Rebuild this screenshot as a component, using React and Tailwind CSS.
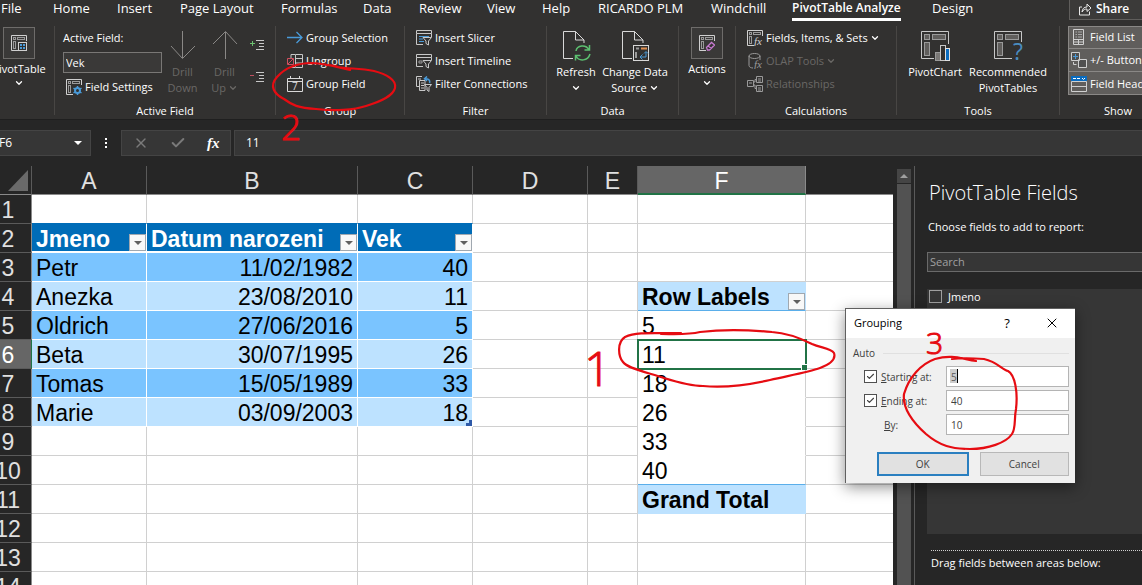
import { ChevronDown, X, Check } from 'lucide-react'

const tabs = [
  { name: 'File', width: 'w-[52px]' },
  { name: 'Home', width: 'w-16' },
  { name: 'Insert', width: 'w-[63px]' },
  { name: 'Page Layout', width: 'w-[101px]' },
  { name: 'Formulas', width: 'w-[82px]' },
  { name: 'Data', width: 'w-14' },
  { name: 'Review', width: 'w-[68px]' },
  { name: 'View', width: 'w-[55px]' },
  { name: 'Help', width: 'w-14' },
  { name: 'RICARDO PLM', width: 'w-[113px]' },
  { name: 'Windchill', width: 'w-[81px]' },
  { name: 'PivotTable Analyze', width: 'w-[140px]', active: true },
  { name: 'Design', width: 'w-16' }
]

const people = [
  ['Petr', '11/02/1982', 40],
  ['Anezka', '23/08/2010', 11],
  ['Oldrich', '27/06/2016', 5],
  ['Beta', '30/07/1995', 26],
  ['Tomas', '15/05/1989', 33],
  ['Marie', '03/09/2003', 18]
]

const pivotLabels = { 5: '5', 6: '11', 7: '18', 8: '26', 9: '33', 10: '40' }

export default function App() {
  return <div className="relative h-screen overflow-hidden flex flex-col bg-[#262626] text-white text-[11px] leading-4 font-['Open_Sans','Noto_Sans',sans-serif]">
    <Tabs></Tabs>
    <Ribbon></Ribbon>
    <FormulaBar></FormulaBar>
    <div className="flex grow min-h-0">
      <Sheet></Sheet>
      <ScrollBar></ScrollBar>
      <FieldsPane></FieldsPane>
    </div>
    <GroupingDialog></GroupingDialog>
    <Ink></Ink>
  </div>
}

const Tabs = () => {
  return <nav className="flex shrink-0 h-[22px] bg-[#323130] pl-px text-[13px] leading-4 whitespace-nowrap">
    {tabs.map(tab => <div key={tab.name} className={`shrink-0 ${tab.width}`}>
      <button className={tab.active ? 'flex font-semibold border-b-3 border-white h-[21px] text-[12px]' : 'flex'}>{tab.name}</button>
    </div>)}
    <div className="grow"></div>
    <button className="shrink-0 w-[74px] -mr-px h-5 pl-2 pb-0.5 flex items-center gap-1 font-semibold text-[12px] bg-[#3b3a39] border border-t-0 border-[#605e5c]">
      <svg className="size-3.5" viewBox="0 0 14 14" fill="none" stroke="#e8e8e8">
        <path d="M4 5H1.500V13H11.500V9.500M4 10C4.500 6.500 6 5 9 5V2L13 6L9 9.500V7C7 7 5.500 7.500 4 10Z" />
      </svg>
      Share
    </button>
  </nav>
}

const Divider = () => <div className="shrink-0 w-px h-[89px] bg-[#484644]"></div>

const Group = ({ title, width, children }) => {
  return <section className={`shrink-0 flex flex-col whitespace-nowrap ${width}`}>
    <div className="h-[77px]">{children}</div>
    <h2 className="text-center">{title}</h2>
  </section>
}

const Item = ({ icon, disabled, menu, children }) => {
  return <button disabled={disabled} className={`flex items-center h-[23px] gap-0.5 ${disabled ? 'text-[#6a6866]' : ''}`}>
    <span className="w-4 shrink-0">{icon}</span>
    <span>{children}</span>
    {menu && <ChevronDown className="size-2.5" strokeWidth={3}></ChevronDown>}
  </button>
}

const BigButton = ({ icon, first, second, menu, disabled, width }) => {
  return <button disabled={disabled} className={`shrink-0 flex flex-col items-center pt-1 ${width} ${disabled ? 'text-[#6a6866]' : ''}`}>
    <span className="h-[34px]">{icon}</span>
    <span>{first}</span>
    <span className="flex items-center gap-0.5 h-4">
      {second}
      {menu && <ChevronDown className="size-2.5" strokeWidth={3}></ChevronDown>}
    </span>
  </button>
}

const BoxButton = ({ icon, name }) => {
  return <button className="w-full flex flex-col items-center pt-px">
    <span className="size-8 flex items-center justify-center border border-[#6e6c6a] bg-[#3a3938]">{icon}</span>
    <span className="mt-0.5">{name}</span>
    <ChevronDown className="size-2.5 mt-px" strokeWidth={3}></ChevronDown>
  </button>
}

const Ribbon = () => {
  return <div className="flex shrink-0 h-[98px] pt-1 bg-[#323130] overflow-hidden border-b border-[#1f1f1f]">
    <Group title="" width="-ml-4 w-[70px]">
      <BoxButton name="PivotTable" icon={<PivotIcon badge="grid"></PivotIcon>}></BoxButton>
    </Group>
    <Divider></Divider>
    <Group title="Active Field" width="w-[220px]">
      <div className="flex">
        <div className="w-[107px] shrink-0 pl-2 pt-1">
          <label htmlFor="active-field" className="block h-[22px]">Active Field:</label>
          <input id="active-field" defaultValue="Vek" className="block w-[99px] h-[21px] px-0.5 border border-[#797775] bg-[#3a3938]" />
          <div className="pl-[3px] pt-0.5">
            <Item icon={<PivotIcon badge="gear"></PivotIcon>}>
              <span className="pl-px">Field Settings</span>
            </Item>
          </div>
        </div>
        <BigButton disabled first="Drill" second="Down" width="w-[41px]" icon={<DrillIcon></DrillIcon>}></BigButton>
        <BigButton disabled menu first="Drill" second="Up" width="w-[43px]" icon={<DrillIcon up></DrillIcon>}></BigButton>
        <div className="flex flex-col gap-4 pt-3 pl-1">
          <button aria-label="Expand Field"><ExpandIcon plus></ExpandIcon></button>
          <button aria-label="Collapse Field"><ExpandIcon></ExpandIcon></button>
        </div>
      </div>
    </Group>
    <Divider></Divider>
    <Group title="Group" width="w-32">
      <div className="pl-[11px]">
        <Item icon={<ArrowIcon></ArrowIcon>}><span className="pl-px">Group Selection</span></Item>
        <Item icon={<UngroupIcon></UngroupIcon>}><span className="pl-px">Ungroup</span></Item>
        <Item icon={<CalendarIcon></CalendarIcon>}><span className="pl-px">Group Field</span></Item>
      </div>
    </Group>
    <Divider></Divider>
    <Group title="Filter" width="w-[141px]">
      <div className="pl-[11px]">
        <Item icon={<FilterIcon kind="slicer"></FilterIcon>}><span className="pl-px">Insert Slicer</span></Item>
        <Item icon={<FilterIcon kind="timeline"></FilterIcon>}><span className="pl-px">Insert Timeline</span></Item>
        <Item icon={<ConnectionsIcon></ConnectionsIcon>}><span className="pl-px">Filter Connections</span></Item>
      </div>
    </Group>
    <Divider></Divider>
    <Group title="Data" width="w-[131px]">
      <div className="flex pl-2">
        <BigButton menu first="Refresh" width="w-[42px]" icon={<PageIcon kind="refresh"></PageIcon>}></BigButton>
        <BigButton menu first="Change Data" second="Source" width="w-[76px]" icon={<PageIcon kind="source"></PageIcon>}></BigButton>
      </div>
    </Group>
    <Divider></Divider>
    <Group title="" width="w-14">
      <BoxButton name="Actions" icon={<PivotIcon badge="eraser"></PivotIcon>}></BoxButton>
    </Group>
    <Divider></Divider>
    <Group title="Calculations" width="w-40">
      <div className="pl-[11px]">
        <Item menu icon={<PivotIcon badge="fx"></PivotIcon>}><span className="pl-px">Fields, Items, &amp; Sets</span></Item>
        <Item disabled menu icon={<OlapIcon></OlapIcon>}><span className="pl-px">OLAP Tools</span></Item>
        <Item disabled icon={<RelationsIcon></RelationsIcon>}><span className="pl-px">Relationships</span></Item>
      </div>
    </Group>
    <Divider></Divider>
    <Group title="Tools" width="w-[162px]">
      <div className="flex pl-2">
        <BigButton first="PivotChart" width="w-[60px]" icon={<ToolIcon kind="chart"></ToolIcon>}></BigButton>
        <BigButton first="Recommended" second="PivotTables" width="w-[86px]" icon={<ToolIcon></ToolIcon>}></BigButton>
      </div>
    </Group>
    <Divider></Divider>
    <Group title="Show" width="w-[116px]">
      <div className="ml-2 outline -outline-offset-1 outline-[#8a8886] bg-[#605e5c] divide-y divide-[#8a8886] *:pl-[3px] *:w-full">
        <Item icon={<ListIcon></ListIcon>}><span className="pl-px">Field List</span></Item>
        <Item icon={<ButtonsIcon></ButtonsIcon>}><span className="pl-px">+/- Buttons</span></Item>
        <Item icon={<HeadersIcon></HeadersIcon>}><span className="pl-px">Field Headers</span></Item>
      </div>
    </Group>
  </div>
}

const FormulaBar = () => {
  return <div className="flex shrink-0 h-[46px] pt-2.5 pb-2.5 items-stretch text-[12px]">
    <div className="flex items-center justify-between w-[93px] -ml-0.5 pr-2 bg-[#363636] border border-[#444]">
      <input aria-label="Name Box" defaultValue="F6" className="w-10" />
      <span className="border-x-4 border-x-transparent border-t-4 border-t-white"></span>
    </div>
    <div className="w-[30px] flex flex-col items-center justify-center gap-0.5">
      <span className="size-0.5 bg-white"></span>
      <span className="size-0.5 bg-white"></span>
      <span className="size-0.5 bg-white"></span>
    </div>
    <div className="w-[110px] flex items-center justify-around bg-[#363636] border border-[#444]">
      <button aria-label="Cancel entry"><X className="size-4 text-[#7a7a7a]"></X></button>
      <button aria-label="Confirm entry"><Check className="size-4 text-[#7a7a7a]" strokeWidth={3}></Check></button>
      <button className="font-['Liberation_Serif',serif] italic font-bold text-[15px]">fx</button>
    </div>
    <input aria-label="Formula" defaultValue="11" className="grow ml-[3px] pl-[11px] bg-[#363636] border border-r-0 border-[#444]" />
  </div>
}

const Sheet = () => {
  return <main className="grow min-w-0 overflow-hidden font-['Liberation_Sans',Arial,sans-serif] text-[23px] leading-[26px]">
    <table className="-ml-[13px] w-[calc(100%+13px)] table-fixed border-separate border-spacing-0">
      <colgroup>
        <col className="w-[45px]" />
        <col className="w-[115px]" />
        <col className="w-[211px]" />
        <col className="w-[115px]" />
        <col className="w-[115px]" />
        <col className="w-[50px]" />
        <col className="w-[168px]" />
        <col />
      </colgroup>
      <thead>
        <tr className="text-[#e0e0e0]">
          <th className="h-[29px] p-0 pr-[3px] pb-[3px] align-bottom border-r border-b border-r-[#5a5a5a] border-b-[#8a8a8a]">
            <svg className="ml-auto w-5 h-[21px]" viewBox="0 0 20 21"><path d="M20 0V21H0Z" fill="#6a6a6a" /></svg>
          </th>
          {['A', 'B', 'C', 'D', 'E', 'F', ''].map(letter => <th key={letter} className={headClass(letter)}>{letter}</th>)}
        </tr>
      </thead>
      <tbody className="text-black">
        {Array.from({ length: 14 }, (_, i) => <Row key={i} number={i + 1}></Row>)}
      </tbody>
    </table>
  </main>
}

const headClass = (letter) => {
  if (letter === 'F') return 'p-0 pt-[3px] font-normal text-white bg-[#666] border-r border-b-2 border-r-[#8a8a8a] border-b-[#217346] leading-6'
  if (letter === '') return 'p-0 border-b border-[#8a8a8a]'
  return 'p-0 pt-0.5 font-normal border-r border-b border-r-[#5a5a5a] border-b-[#8a8a8a]'
}

const Row = ({ number }) => {
  const person = people[number - 3]
  const selected = number === 6
  return <tr className="bg-white">
    <th className={`h-[29px] p-0 pt-0.5 pr-0.5 font-normal border-r border-b border-b-[#5a5a5a] ${selected ? 'bg-[#666] text-white border-r-[#217346]' : 'bg-[#262626] text-[#e0e0e0] border-r-[#8a8a8a]'}`}>{number}</th>
    {number === 2 && ['Jmeno', 'Datum narozeni', 'Vek'].map(name => <th key={name} className="p-0 border-r border-b-2 border-white bg-[#006cb7] text-white text-left leading-6">
      <div className="flex items-end justify-between h-[27px] pl-1">
        <span className="whitespace-nowrap">{name}</span>
        <FilterButton></FilterButton>
      </div>
    </th>)}
    {person && person.map((value, i) => <td
      key={i}
      className={`relative p-0 pt-0.5 px-1 border-r border-b border-white ${number % 2 ? 'bg-[#7ac4ff]' : 'bg-[#bde2ff]'} ${i ? 'text-right' : 'text-left'}`}
    >
      {value}
      {number === 8 && i === 2 && <svg className="absolute right-0 bottom-0 size-1.5" viewBox="0 0 6 6"><path d="M3 0H6V6H0V3H3Z" fill="#2f5aa8" /></svg>}
    </td>)}
    {!person && number !== 2 && [0, 1, 2].map(i => <td key={i} className={`p-0 border-r border-b border-r-[#d0d0d0] ${number === 1 ? 'border-b-[#006cb7]' : 'border-b-[#d0d0d0]'}`}></td>)}
    <td className="p-0 border-r border-b border-[#d0d0d0]"></td>
    <td className="p-0 border-r border-b border-[#d0d0d0]"></td>
    <PivotCell number={number}></PivotCell>
    <td className="p-0 border-b border-[#d0d0d0]"></td>
  </tr>
}

const PivotCell = ({ number }) => {
  if (number === 4) {
    return <th className="p-0 border-r border-b border-r-[#bde2ff] border-b-[#5aaeea] bg-[#bde2ff] text-left">
      <div className="flex items-end justify-between h-7 pl-1">
        <span className="whitespace-nowrap">Row Labels</span>
        <FilterButton></FilterButton>
      </div>
    </th>
  }
  if (number === 11) return <th className="p-0 pt-0.5 pl-1 bg-[#bde2ff] border-r border-b border-[#bde2ff] text-left">Grand Total</th>
  if (number === 6) {
    return <td className="relative p-0 pt-0.5 pl-1 outline-2 -outline-offset-1 outline-[#217346] border-r border-b border-white">
      {pivotLabels[number]}
      <span className="absolute -right-0.5 -bottom-0.5 size-1.5 bg-[#217346] border-t border-l border-white"></span>
    </td>
  }
  if (pivotLabels[number]) return <td className={`p-0 pt-0.5 pl-1 border-r border-b border-r-[#d0d0d0] ${number === 10 ? 'border-b-[#5aaeea]' : 'border-b-white'}`}>{pivotLabels[number]}</td>
  return <td className="p-0 border-r border-b border-[#d0d0d0]"></td>
}

const FilterButton = () => {
  return <button aria-label="Filter" className="shrink-0 size-[17px] flex items-center justify-center bg-[#f8f8f8] border border-[#a0a8b0]">
    <span className="border-x-4 border-x-transparent border-t-4 border-t-[#606060]"></span>
  </button>
}

const ScrollBar = () => {
  return <div className="shrink-0 w-[22px] pl-1 pr-[3px] pt-[3px] border-r border-[#5a5a5a] flex flex-col">
    <div className="h-[14px] flex items-center justify-center bg-[#454545]">
      <span className="border-x-4 border-x-transparent border-b-4 border-b-[#a0a0a0]"></span>
    </div>
    <div className="grow mt-px bg-[#525252]"></div>
  </div>
}

const FieldsPane = () => {
  return <aside className="shrink-0 w-[227px] pl-3 flex flex-col whitespace-nowrap overflow-hidden">
    <h2 className="mt-[11px] pl-0.5 text-[20px] leading-8 font-light">PivotTable Fields</h2>
    <p className="mt-2.5 pl-px">Choose fields to add to report:</p>
    <input aria-label="Search fields" placeholder="Search" className="mt-[17px] -mr-1 h-5 px-0.5 pb-0.5 shrink-0 bg-[#363636] border border-[#6a6a6a] placeholder:text-[#a0a0a0]" />
    <div className="mt-[17px] h-[245px] shrink-0 pl-0.5 bg-[#363636]">
      <label className="flex items-center gap-1.5 h-[15px]">
        <input type="checkbox" className="appearance-none size-[13px] border border-[#a0a0a0] bg-[#363636]" />
        Jmeno
      </label>
    </div>
    <div className="mt-4 ml-1 border-t border-dotted border-[#d0d0d0]"></div>
    <p className="mt-1 pl-1">Drag fields between areas below:</p>
  </aside>
}

const GroupingDialog = () => {
  return <div role="dialog" aria-label="Grouping" className="absolute left-[845px] top-[308px] w-[230px] bg-[#f0f0f0] text-[#404040] text-[10px] shadow-[0_4px_14px_rgba(0,0,0,0.45)] border-l border-t border-[#606060]">
    <div className="flex items-center h-[29px] pl-2 pr-[15px] pb-0.5 bg-white text-black text-[11px]">
      <span className="grow">Grouping</span>
      <button className="w-4 mr-[29px] text-[13px]">?</button>
      <button aria-label="Close"><X className="size-4" strokeWidth={1.5}></X></button>
    </div>
    <form className="pl-[7px] pr-1.5 pt-[7px] pb-[7px]" onSubmit={e => e.preventDefault()}>
      <div className="flex items-center gap-2">
        Auto
        <span className="grow h-px bg-[#e0e0e0]"></span>
      </div>
      <div className="flex flex-col gap-[3px] mt-[5px]">
        <DialogRow id="start" checked label={<><u>S</u>tarting at:</>} value="5"></DialogRow>
        <DialogRow id="end" checked label={<><u>E</u>nding at:</>} value="40"></DialogRow>
        <DialogRow id="by" label={<><u>B</u>y:</>} value="10"></DialogRow>
      </div>
      <div className="flex gap-[11px] mt-[17px] pl-6">
        <button className="flex-1 h-6 bg-[#e1e1e1] border-2 border-[#2a7fc0]">OK</button>
        <button className="flex-1 h-6 bg-[#e1e1e1] border border-[#b8b8b8]">Cancel</button>
      </div>
    </form>
  </div>
}

const DialogRow = ({ id, label, value, checked }) => {
  return <div className="flex items-center h-[21px]">
    <div className="grow flex items-center pl-[11px]">
      {checked && <span className="relative size-[13px] mr-1">
        <input type="checkbox" defaultChecked aria-label={`Use ${id}`} className="block appearance-none size-[13px] bg-white border border-[#505050]" />
        <Check className="absolute left-0.5 top-0.5 size-[9px] pointer-events-none" strokeWidth={3}></Check>
      </span>}
      <label htmlFor={id} className={checked ? '' : 'pl-5'}>{label}</label>
    </div>
    {value === '5'
      ? <div className="relative w-[123px] h-[21px]">
        <input id={id} defaultValue={value} className="block w-full h-full pl-1 bg-white border border-[#b4b4b4]" />
        <span className="absolute left-1 top-[3px] w-2 h-[14px] bg-[#808080]/40 border-r border-black"></span>
      </div>
      : <input id={id} defaultValue={value} className="w-[123px] h-[21px] pl-1 bg-white border border-[#b4b4b4]" />}
  </div>
}

/* red pen marks over the whole window */
const Ink = () => {
  return <svg className="absolute left-0 top-0 w-[1142px] h-[585px] pointer-events-none" viewBox="0 0 1142 585" fill="none" stroke="#e60c12" strokeWidth="2.200" strokeLinecap="round" strokeLinejoin="round">
    <path d="M350 70C340 68 328 64 312 63C298 63 285 68 277 77C269 86 274 94 284 99C292 105 298 108 316 109C334 111 354 110 366 106C382 101 393 96 395 88C397 80 386 74 374 71C360 68 348 69 338 67C334 65 330 65 326 65" />
    <path d="M681 333C660 334 638 331 625 337C617 342 618 356 623 362C628 369 650 373 664 378C680 383 693 386 703 386C724 388 748 385 770 380C792 375 809 372 820 368C831 364 836 359 834 353C831 348 821 348 812 344C800 338 788 333 772 332C740 329 716 330 700 332C688 335 674 334 661 334" />
    <path d="M976 361C962 359 952 354 935 359C921 364 909 377 904 394C902 410 916 425 926 434C940 446 952 449 970 449C988 449 1006 443 1012 434C1016 428 1014 419 1016 409C1018 392 1015 375 1008 371C1002 370 998 362 984 359C971 358 960 358 952 359" />
    <g fill="#e60c12" strokeWidth="1" className="font-['Open_Sans',sans-serif] font-light">
      <text x="584" y="386" fontSize="48">1</text>
      <text x="281" y="140" fontSize="35">2</text>
      <text x="926" y="354" fontSize="30">3</text>
    </g>
  </svg>
}

const fxClass = "font-['Liberation_Serif',serif] italic"

const PivotIcon = ({ badge }) => {
  return <svg className="size-4" viewBox="0 0 16 16" fill="none" stroke="#d0d0d0">
    <path d="M7 15.500H.5V.5H15.500V6" />
    <rect x="2.500" y="2.500" width="2" height="2" stroke="#9a9a9a" />
    <rect x="6.500" y="2.500" width="7" height="2" stroke="#9a9a9a" />
    <rect x="2.500" y="6.500" width="2" height="7" stroke="#9a9a9a" />
    {badge === 'grid' && <g><rect x="7.500" y="7.500" width="8" height="8" fill="#323130" /><path d="M9 10H11M12 10H14M9 13H11M12 13H14" stroke="#4a9bd9" strokeWidth="2" /></g>}
    {badge === 'gear' && <g stroke="#4a9bd9"><circle cx="11.500" cy="11.500" r="2.500" strokeWidth="2" /><path d="M11.500 7V9M11.500 14V16M7.500 9.200L9 10.200M14 13L15.500 14M7.500 14L9 13M14 10L15.500 9" strokeWidth="1.500" /></g>}
    {badge === 'eraser' && <path d="M7.500 12.500L12.500 7.500L15.500 10L10.500 15H8.500ZM9 11L12.500 13.500" fill="#323130" stroke="#c77ad0" strokeWidth="1.300" />}
    {badge === 'fx' && <text x="7" y="15" fontSize="11" fill="#d0d0d0" stroke="none" className={fxClass}>fx</text>}
  </svg>
}

const ArrowIcon = () => {
  return <svg className="size-4" viewBox="0 0 16 16" fill="none" stroke="#4a9bd9" strokeWidth="1.300">
    <path d="M0 7.500H15M9.500 2L15 7.500L9.500 13" />
  </svg>
}

const DrillIcon = ({ up }) => {
  return <svg className={up ? 'w-[26px] h-[30px] rotate-180' : 'w-[26px] h-[30px]'} viewBox="0 0 26 30" fill="none" stroke="#8a8886">
    <path d="M12.500 1V28M1 16L12.500 28.500L25 16" />
  </svg>
}

const ExpandIcon = ({ plus }) => {
  return <svg className="w-[15px] h-4" viewBox="0 0 15 16" fill="none" stroke="#c8c8c8">
    {plus ? <path d="M0 5.500H5M2.500 3V8" stroke="#6cc070" /> : <path d="M0 5.500H4" stroke="#c05060" />}
    <path d="M6 2.500H14M9 5.500H14M9 8.500H14M6 11.500H14" />
  </svg>
}

const UngroupIcon = () => {
  return <svg className="size-4" viewBox="0 0 16 16" fill="none" stroke="#c8c8c8">
    <path d="M4 5V1.500H8M8 14.500H4V13M8.500 1.500H15.500V14.500H8.500ZM8.500 5.500H15.500M8.500 10H15.500" />
    <path d="M.5 5.500H6.500V11.500H.5ZM1 11L6 6" stroke="#d05060" />
  </svg>
}

const CalendarIcon = () => {
  return <svg className="size-4" viewBox="0 0 16 16" fill="none" stroke="#d8d8d8">
    <path d="M.5 2.500H15.500V15.500H.5ZM.5 5.500H15.500M3.500 0V3M12.500 0V3" />
    <text x="5" y="14" fontSize="10" fill="#d8d8d8" stroke="none">7</text>
  </svg>
}

const FilterIcon = ({ kind }) => {
  return <svg className="size-4" viewBox="0 0 16 16" fill="none" stroke="#c8c8c8">
    {kind === 'slicer'
      ? <g><path d="M.5 .5H15.500V3.500H.5ZM.5 3.500V14.500H7M15.500 3.500V7" /><path d="M3 6.500H13M3 9H7M3 11.500H8" stroke="#4a9bd9" /></g>
      : <g><path d="M.5 1.500H15.500V4.500H.5ZM.5 4.500V13.500H7M15.500 4.500V7" /><path d="M3 8H6V10H3Z" stroke="#9a9a9a" /></g>}
    <path d="M7 7.500H15.500L12.500 11V15L10 13.500V11Z" fill="#323130" />
  </svg>
}

const ConnectionsIcon = () => {
  return <svg className="size-4" viewBox="0 0 16 16" fill="none" stroke="#c8c8c8">
    <path d="M.5 .5H6M.5 .5V10.500H3M3.500 4.500H9V14.500H3.500ZM5 7H8M5 9.500H8M5 12H8M2 3H5" />
    <path d="M13.500 7C14.500 4 12 2.500 9 2.800M11 .5L8.500 2.800L11 5" stroke="#4a9bd9" strokeWidth="1.500" />
    <path d="M8.500 8.500H15.500L13 11.500V15.500L11 14V11.500Z" fill="#323130" />
  </svg>
}

const PageIcon = ({ kind }) => {
  return <svg className="w-[30px] h-8" viewBox="0 0 30 32" fill="none" stroke="#d8d8d8">
    <path d="M12 28.500H2.500V1.500H14.500L23 10V13M14.500 1.500V10H23" />
    {kind === 'refresh'
      ? <path d="M15 21C16 15 25 14 28 20M28.500 15V20H23.500M29 24C27 31 18 32 15 26M14.500 30.500V25.500H19.500" stroke="#5cc070" strokeWidth="1.500" />
      : <g><rect x="13.500" y="15.500" width="15" height="15" fill="#323130" /><path d="M16 18.500H19M16 22V28" stroke="#9a9a9a" strokeWidth="2" /><path d="M21 18.500H27" stroke="#e09050" strokeWidth="2" /><path d="M26 22V27H20M22.500 24.500L20 27L22.500 29.500M24 23.500L26 21.500L28 23.500" stroke="#4a9bd9" /></g>}
  </svg>
}

const OlapIcon = () => {
  return <svg className="size-4" viewBox="0 0 16 16" fill="none" stroke="#9a9a9a">
    <ellipse cx="7.500" cy="3" rx="5.500" ry="2.500" />
    <path d="M2 3V12.500C2 14 4 15 6 15M13 3V7" />
    <text x="7" y="15" fontSize="11" fill="#9a9a9a" stroke="none" className={fxClass}>fx</text>
  </svg>
}

const RelationsIcon = () => {
  return <svg className="size-4" viewBox="0 0 16 16" fill="none" stroke="#9a9a9a">
    <path d="M.5 4.500H6.500V10.500H.5ZM9.500 .5H15.500V6.500H9.500ZM9.500 9.500H15.500V15.500H9.500ZM2 7H5M11 3H14M11 5H14M11 12H14M11 14H14M6.500 6H8V3.500H9.500M6.500 9H8V12.500H9.500" />
  </svg>
}

const ToolIcon = ({ kind }) => {
  return <svg className="w-[31px] h-8" viewBox="0 0 31 32" fill="none" stroke="#c8c8c8">
    <path d={kind ? 'M14 28.500H1.500V1.500H28.500V14' : 'M19 28.500H1.500V1.500H28.500V12'} />
    <g fill="#605e5c" stroke="#9a9a9a">
      <rect x="4.500" y="4.500" width="5" height="5" />
      <rect x="12.500" y="4.500" width="13" height="5" />
      <rect x="4.500" y="12.500" width="5" height="13" />
    </g>
    {kind === 'chart'
      ? <g><rect x="15.500" y="22.500" width="5" height="8" fill="#7a7876" stroke="#9a9a9a" /><rect x="20.500" y="15.500" width="5" height="15" fill="#323130" /><rect x="25.500" y="18.500" width="4" height="12" fill="#0a6cc0" stroke="#e0e0e0" /></g>
      : <text x="20" y="30" fontSize="23" fill="#4a8cc0" stroke="none">?</text>}
  </svg>
}

const ListIcon = () => {
  return <svg className="size-4" viewBox="0 0 16 16" fill="none" stroke="#d0d0d0">
    <path d="M2.500 .5H12.500V15.500H2.500ZM2.500 10.500H12.500M2.500 13H12.500M7.500 10.500V15" />
    <path d="M4.500 3H6M7 3H11M4.500 5.500H6M7 5.500H11M4.500 8H6M7 8H11" stroke="#a8a8a8" />
  </svg>
}

const ButtonsIcon = () => {
  return <svg className="size-4" viewBox="0 0 16 16" fill="none" stroke="#d0d0d0">
    <path d="M.5 .5H8.500V8.500H.5ZM7.500 7.500H15.500V15.500H7.500Z" fill="#505050" />
    <path d="M2 4.500H7M4.500 2V7" stroke="#4a9bd9" />
    <path d="M2.500 10V12.500H5.500" />
  </svg>
}

const HeadersIcon = () => {
  return <svg className="size-4" viewBox="0 0 16 16" fill="none" stroke="#d0d0d0">
    <path d="M.5 5.500H15.500V15.500H.5ZM.5 10.500H15.500" />
    <rect width="16" height="5" fill="#0a6cc0" stroke="none" />
    <path d="M2 2.500H5M6 2.500H9M11 2L12.500 3.500L14 2" stroke="#fff" />
  </svg>
}
